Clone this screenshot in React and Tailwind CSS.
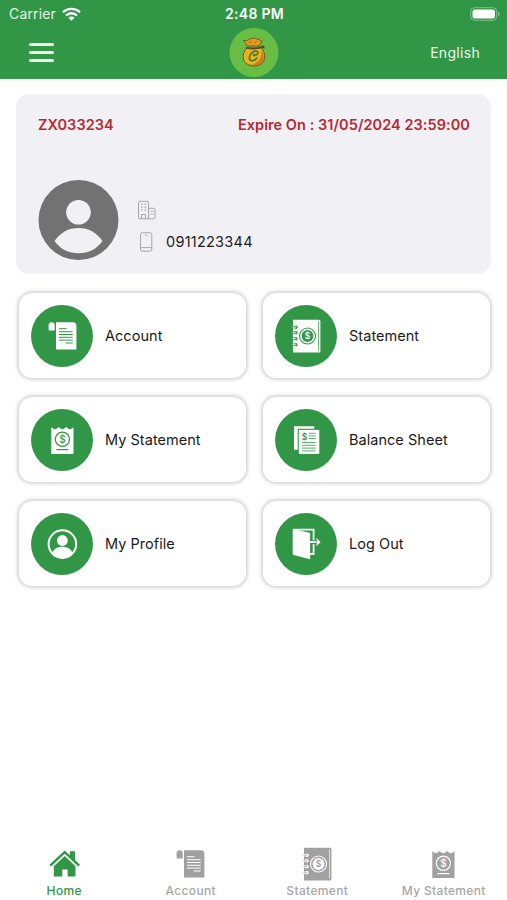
import React from "react";

const GREEN = "#319747";

function Dollar({ x, y, size, fill, weight = 600 }) {
  return (
    <text
      x={x}
      y={y}
      fontSize={size}
      fill={fill}
      textAnchor="middle"
      fontWeight={weight}
      fontFamily="Inter, sans-serif"
    >
      $
    </text>
  );
}

function Glyph({ children }) {
  return (
    <svg width="41" height="38" viewBox="10 11.5 41 38" className="shrink-0">
      {children}
    </svg>
  );
}

function AccountIcon({ fg, bg }) {
  return (
    <Glyph>
      <path d="M16.6 25V19.8a3 3 0 0 1 6.1 0V25z" fill={fg} />
      <path d="M24 18.2v-1.5h16.8a3.6 3.6 0 0 1 3.6 3.6V44H24z" fill={fg} />
      <path
        d="M27 23.2h7.5M27 26.2h13.7M27 29h13.7M27 31.8h13.7M27 34.6h13.7M33.7 37.5h7"
        stroke={bg}
        strokeWidth="1"
      />
    </Glyph>
  );
}

function StatementIcon({ fg, bg }) {
  return (
    <Glyph>
      <path d="M17 14.3h25.9a1.5 1.5 0 0 1 1.5 1.5v29.7a1.5 1.5 0 0 1-1.5 1.5H17z" fill={fg} />
      <path d="M42.5 16v29" stroke={bg} strokeWidth="0.7" />
      {[21.7, 27.3, 33.2, 39.2].map((y) => (
        <g key={y}>
          <rect x="16.4" y={y - 1.1} width="3" height="2.2" fill={bg} />
          <circle cx="20" cy={y} r="1.7" fill={bg} />
          <path d={`M16.3 ${y}h4`} stroke={fg} strokeWidth="0.8" />
        </g>
      ))}
      <circle cx="31.5" cy="30.5" r="8" fill="none" stroke={bg} strokeWidth="1.1" />
      <circle cx="31.5" cy="30.5" r="5.9" fill={bg} />
      <Dollar x="31.5" y="33.6" size="8.5" fill={fg} />
    </Glyph>
  );
}

function ReceiptIcon({ fg, bg }) {
  return (
    <Glyph>
      <path
        d="M19.3 44.4V17.7l1.8 1.2q1.9 1.5 3.8 0l1.8-1.3 1.8 1.3q1.9 1.5 3.8 0l1.8-1.3 1.8 1.3q1.9 1.5 3.8 0l1.8-1.2v26.7z"
        fill={fg}
      />
      <circle cx="30.4" cy="29.8" r="7.1" fill="none" stroke={bg} strokeWidth="1.3" />
      <Dollar x="30.4" y="33.4" size="10" fill={bg} weight={500} />
      <path d="M24.4 40.1h12" stroke={bg} strokeWidth="1.2" />
    </Glyph>
  );
}

function BalanceIcon({ fg, bg }) {
  return (
    <Glyph>
      <path d="M18 16.7h20.3v2.6H21.7v21H18z" fill={fg} />
      <path d="M22.8 20.4h20.5v24H22.8z" fill={fg} />
      <Dollar x="28.6" y="30.4" size="8.5" fill={bg} />
      <path
        d="M32.7 23.8h7M32.7 26.4h7M32.7 29h7M26 33h13.7M26 35.8h13.7M26 38.6h13.7M26 41.4h13.7"
        stroke={bg}
        strokeWidth="0.8"
      />
    </Glyph>
  );
}

function ProfileIcon({ fg }) {
  return (
    <Glyph>
      <circle cx="30.4" cy="30.6" r="13.8" fill="none" stroke={fg} strokeWidth="2" />
      <circle cx="30.4" cy="27" r="5.4" fill={fg} />
      <path d="M20.2 39.6c1.6-4.4 5.6-6.4 10.2-6.4s8.600 2 10.200 6.400a13 13 0 0 1-20.400 0z" fill={fg} />
    </Glyph>
  );
}

function LogOutIcon({ fg, bg }) {
  return (
    <Glyph>
      <path d="M17.5 16.2h20.1v24.3H32" fill="none" stroke={fg} strokeWidth="1.8" />
      <path d="M16.7 15.4l16.6 3.8q.8.2.8 1v25.6L17.6 41.4q-.9-.3-.9-1z" fill={fg} />
      <path d="M36 28.6h6" stroke={bg} strokeWidth="3.8" />
      <path d="M33.5 28.6h7" stroke={fg} strokeWidth="1.8" />
      <path d="M40.3 24.2l4.3 4.4-4.3 4.4c.8-3 .8-5.800 0-8.800z" fill={fg} />
    </Glyph>
  );
}

function HomeIcon({ fg }) {
  return (
    <Glyph>
      <path d="M15.400 31.300L30.700 17l5.300 5v-4.300h5v8.900l5 4.700-1.700 1.800L30.700 20.300 17.100 33.100z" fill={fg} />
      <path d="M19.800 32.800l10.900-10.200 10.800 10.200v10.100h-7.900v-7h-5.300v7h-8.500z" fill={fg} />
    </Glyph>
  );
}

const menu = [
  { label: "Account", Icon: AccountIcon },
  { label: "Statement", Icon: StatementIcon },
  { label: "My Statement", Icon: ReceiptIcon },
  { label: "Balance Sheet", Icon: BalanceIcon },
  { label: "My Profile", Icon: ProfileIcon },
  { label: "Log Out", Icon: LogOutIcon },
];

const tabs = [
  { label: "Home", Icon: HomeIcon, active: true },
  { label: "Account", Icon: AccountIcon },
  { label: "Statement", Icon: StatementIcon },
  { label: "My Statement", Icon: ReceiptIcon },
];

function StatusBar() {
  return (
    <div className="grid h-[27px] grid-cols-3 items-center pl-[9px] pr-[7px]">
      <div className="flex items-center gap-[6px]">
        <span className="text-[14px] tracking-[0.15px] text-[#e3f3e5]">Carrier</span>
        <svg width="19" height="14" viewBox="0 0 19 14">
          <g fill="none" stroke="#fff" strokeWidth="2.3">
            <path d="M1 5.300a12.200 12.200 0 0 1 17 0" />
            <path d="M4 8.500a7.800 7.800 0 0 1 11 0" />
          </g>
          <path d="M9.500 13.800L6.400 10.700a4.400 4.400 0 0 1 6.200 0z" fill="#fff" />
        </svg>
      </div>
      <span className="text-center text-[14px] font-semibold tracking-[0.300px] text-white">2:48 PM</span>
      <svg width="30" height="14" viewBox="0 0 30 14" className="justify-self-end">
        <rect x="0.700" y="0.700" width="26" height="12.600" rx="3.800" fill="none" stroke="#83c18f" strokeWidth="1" />
        <rect x="2.500" y="2.500" width="22.400" height="9" rx="2.200" fill="#fff" />
        <path d="M28 4.800q1.600.6 1.600 2.200T28 9.200z" fill="#83c18f" />
      </svg>
    </div>
  );
}

function Logo() {
  return (
    <svg width="50" height="50" viewBox="0 -0.5 50 50" className="justify-self-center">
      <circle cx="25" cy="25" r="24.500" fill="#68be45" />
      <path d="M18 20.500c-4.500 4.500-5.200 11-1.500 14.800 4.200 4.200 12.800 4.200 16.800 0 3.800-4 2.800-11-1.300-14.800z" fill="#eeb020" stroke="#71501c" strokeWidth="1" />
      <path d="M32.500 23c3 4.500 3 9.500-.5 12.600-3 2.600-8 2.900-11.500 1.600 8 .2 12.500-5.500 12-14.200z" fill="#c77d1b" />
      <path d="M18.500 18.500c-1-2-2.800-3.800-4.200-5.700 2.200.6 3.700.7 5.200-.6 1.500-1.300 3-.8 4.500-1.400 2-.8 3.200.8 5 1 1.800.3 2.300 2 4.300 2-1.400 1.400-2.400 2.700-3 4.700z" fill="#e69a20" stroke="#71501c" strokeWidth="0.900" />
      <path d="M20 15.500l3-2M25 16l3-2.500" stroke="#8f5a17" strokeWidth="0.800" />
      <path d="M17 19.200c5 1.700 10 1.300 14.500-.3 1.400-.6 3.200-1.600 4 .1v2.200l-2.600-1c-5.200 2-11 2.200-15.900.7z" fill="#5c4a1b" />
      <g fill="none" stroke="#2f7b2a" strokeWidth="1.500" strokeLinecap="round">
        <path d="M24.500 27.500c2.500.6 4.800-1 4.500-2.800-.4-2-4.400-1.600-6.800 1.200-2.400 2.900-2.700 6.600.2 7.300 2 .4 4.200-.9 5.400-2.700" />
        <path d="M25.500 25.700c-1.700 1.400-1.300 3.100.3 2.900" strokeWidth="0.900" />
      </g>
    </svg>
  );
}

function UserCard() {
  return (
    <section className="mx-4 mt-[15px] flex h-[180px] flex-col justify-between rounded-[13px] bg-[#f1f1f5] pb-[13px] pl-[22px] pr-[21px] pt-[21px]">
      <div className="flex justify-between text-[14.500px] font-semibold leading-5 text-[#b92831]">
        <span className="tracking-[0.060px]">ZX033234</span>
        <span className="tracking-[0.060px]">Expire On : 31/05/2024 23:59:00</span>
      </div>
      <div className="flex items-end gap-[19px]">
        <svg width="81" height="81" viewBox="0 0.5 81 81">
          <circle cx="40.500" cy="40.500" r="40" fill="#727272" />
          <circle cx="40.500" cy="32.700" r="12.300" fill="#f1f1f5" />
          <path d="M16.500 61.500c6-8.500 14-13 24-13s18 4.500 24 13c-5.500 8-14 12.300-24 12.300s-18.500-4.300-24-12.300z" fill="#f1f1f5" />
        </svg>
        <div className="flex flex-col gap-[12px] pb-[9px]">
          <svg width="19" height="20" viewBox="0 -0.3 19 20" fill="none" stroke="#a6a6aa" strokeWidth="1">
            <path d="M.5 17.500v-15q0-1.500 1.500-1.500h7q1.500 0 1.500 1.500v16H2Q.5 18.500.5 17.500zM10.500 8h5q1.500 0 1.500 1.500v7.500q0 1.500-1.500 1.500h-5" />
            <path d="M3.500 18.500v-4.300h4v4.300" />
            <path d="M3 4h1.600M6.500 4h1.600M3 6.800h1.600M6.500 6.800h1.600M3 9.600h1.600M6.500 9.600h1.600M12.500 11h1M14.500 11h1M12.500 14h1M14.500 14h1" strokeWidth="1.300" />
          </svg>
          <div className="flex h-5 items-center gap-2">
            <svg width="20" height="20" viewBox="0 0 20 20" fill="none" stroke="#a6a6aa" strokeWidth="1" className="-translate-x-px">
              <rect x="3.500" y="0.700" width="11.300" height="18.500" rx="2" />
              <path d="M3.500 15.600h11.300M8 3h2.600" />
            </svg>
            <span className="text-[14.500px] tracking-[0.250px] text-[#1c1c1e]">0911223344</span>
          </div>
        </div>
      </div>
    </section>
  );
}

export default function App() {
  return (
    <div className="flex h-[900px] w-[507px] flex-col overflow-hidden bg-white font-['Inter',sans-serif] text-[#1a1a1a]">
      <header className="h-[79px] shrink-0 bg-[#319747]">
        <StatusBar />
        <nav className="grid h-[50px] grid-cols-3 items-center pl-[29px] pr-[27px]">
          <div className="flex flex-col gap-[5px]">
            <span className="h-[3px] w-[24.500px] rounded-full bg-[#eef8ef]" />
            <span className="h-[3px] w-[24.500px] rounded-full bg-[#eef8ef]" />
            <span className="h-[3px] w-[24.500px] rounded-full bg-[#eef8ef]" />
          </div>
          <Logo />
          <span className="justify-self-end text-[14px] tracking-[0.300px] text-[#e9f6eb]">English</span>
        </nav>
      </header>
      <UserCard />
      <main className="ml-[19px] mr-[17px] mt-[19px] grid grid-cols-2 gap-x-[17px] gap-y-[19px]">
        {menu.map(({ label, Icon }) => (
          <div
            key={label}
            className="flex h-[85px] items-center gap-3 rounded-[13px] bg-white pl-3 shadow-[0_0_4px_1px_rgba(0,0,0,0.240)]"
          >
            <div className="flex size-[62px] items-center justify-center rounded-full bg-[#319747]">
              <Icon fg="#fff" bg={GREEN} />
            </div>
            <span className="text-[14.500px] tracking-[0.040px]">{label}</span>
          </div>
        ))}
      </main>
      <footer className="mt-auto grid h-[55px] grid-cols-4 pl-px">
        {tabs.map(({ label, Icon, active }) => (
          <div key={label} className="flex flex-col items-center">
            <Icon fg={active ? GREEN : "#a1a1a1"} bg="#fff" />
            <span
              className={
                active
                  ? "text-[12px] font-medium leading-4 tracking-[0.340px] text-[#319747]"
                  : "text-[12px] font-medium leading-4 tracking-[0.340px] text-[#a6a6a6]"
              }
            >
              {label}
            </span>
          </div>
        ))}
      </footer>
    </div>
  );
}
